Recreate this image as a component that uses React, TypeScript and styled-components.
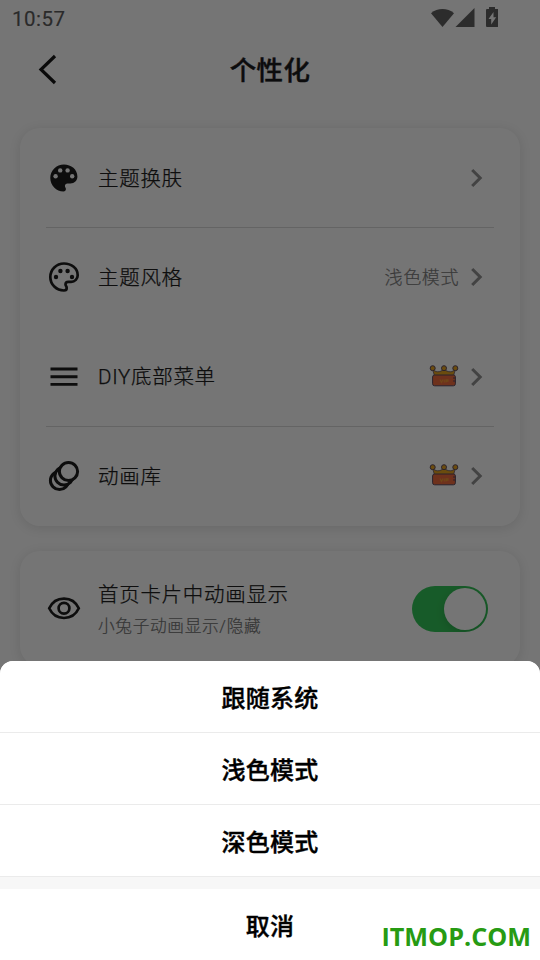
import React from 'react';
import styled, { createGlobalStyle } from 'styled-components';

const GlobalStyle = createGlobalStyle`
  * { box-sizing: border-box; }
  html, body { margin: 0; padding: 0; background: #fff; }
  body { font-family: Roboto, "Noto Sans CJK SC", sans-serif; }
`;

const Screen = styled.div`
  position: relative;
  width: 540px;
  height: 960px;
  overflow: hidden;
  background: #fefefe;
`;

const StatusBar = styled.div`
  display: flex;
  align-items: center;
  justify-content: space-between;
  height: 38px;
  padding: 0 42px 0 12px;
  color: #5c5c5c;
  font-size: 20.5px;
  font-weight: 400;
  letter-spacing: 0.5px;
  -webkit-text-stroke: 0.15px #5c5c5c;
`;

const StatusIcons = styled.svg`
  display: block;
  width: 68px;
  height: 22px;
  margin-bottom: 4px;
`;

const Header = styled.header`
  display: grid;
  grid-template-columns: 96px 1fr 96px;
  align-items: center;
  height: 64px;
`;

const Back = styled.svg`
  width: 30px;
  height: 34px;
  margin: -3px 0 0 32px;
`;

const Title = styled.h1`
  margin: 2px 0 0;
  color: #1c1c1e;
  font-size: 26.5px;
  font-weight: 500;
  line-height: 40px;
  letter-spacing: 0.3px;
  text-align: center;
  -webkit-text-stroke: 0.4px #1c1c1e;
`;

const Cards = styled.main`
  display: flex;
  flex-direction: column;
  gap: 25px;
  padding: 26px 20px 0;
`;

const Card = styled.section`
  border-radius: 20px;
  background: #fff;
  box-shadow: 0 2px 12px rgba(0, 0, 0, 0.11);
`;

const Row = styled.div<{ $height: number; $divider?: boolean; $top?: number }>`
  display: grid;
  grid-template-columns: 36px 1fr auto;
  column-gap: 16px;
  align-items: center;
  height: ${p => p.$height}px;
  margin: 0 26px;
  padding: ${p => p.$top ?? 0}px 10px 0 0;
  border-bottom: ${p => (p.$divider ? '1px solid #dadada' : '0')};
`;

const Icon = styled.svg`
  display: block;
  width: 36px;
  height: 36px;
  margin: -1px 0 0 -0.5px;
`;

const Label = styled.div`
  padding-top: 1px;
  color: #202020;
  font-size: 20.5px;
  font-weight: 300;
  line-height: 30px;
  letter-spacing: 0.7px;
  -webkit-text-stroke: 0.25px #202020;
`;

const TextBlock = styled.div`
  padding-top: 2px;
`;

const Caption = styled.div`
  margin-top: 3px;
  color: #747474;
  font-size: 16.7px;
  font-weight: 300;
  line-height: 28px;
  letter-spacing: 0.65px;
  -webkit-text-stroke: 0.2px #747474;
`;

const Trailing = styled.div<{ $raised?: boolean }>`
  display: flex;
  align-items: center;
  margin-top: ${p => (p.$raised ? '-2px' : '0')};
`;

const Value = styled.span`
  margin: 3px 11px 0 0;
  color: #7c7c7c;
  font-size: 18px;
  font-weight: 300;
  line-height: 26px;
  letter-spacing: 0.6px;
  -webkit-text-stroke: 0.2px #7c7c7c;
`;

const Arrow = styled.svg`
  width: 14px;
  height: 20px;
`;

const CrownSvg = styled.svg`
  width: 30px;
  height: 24px;
  margin: 0 11px 1px 0;
`;

const Switch = styled.div`
  display: flex;
  align-items: center;
  justify-content: flex-end;
  width: 76px;
  height: 46px;
  margin-right: -4px;
  padding: 2px;
  border-radius: 23px;
  overflow: hidden;
  background: #34c759;
`;

const Knob = styled.div`
  width: 42px;
  height: 42px;
  border-radius: 50%;
  background: #fff;
  box-shadow: 0 3px 10px rgba(0, 0, 0, 0.15);
`;

const Scrim = styled.div`
  position: absolute;
  inset: 0;
  display: flex;
  flex-direction: column;
  justify-content: flex-end;
  background: rgba(0, 0, 0, 0.54);
`;

const Sheet = styled.div`
  height: 299px;
  overflow: hidden;
  border-radius: 13px 13px 0 0;
  background: #fff;
`;

const Option = styled.button<{ $last?: boolean }>`
  display: block;
  width: 100%;
  height: 72px;
  padding: ${p => (p.$last ? '3px' : '4px')} 0 0;
  border: 0;
  border-bottom: ${p => (p.$last ? '0' : '1px solid #ebebeb')};
  background: #fff;
  color: #000;
  font: 500 24px/36px Roboto, "Noto Sans CJK SC", sans-serif;
  letter-spacing: 0.2px;
  -webkit-text-stroke: 0.4px #000;
`;

const Gap = styled.div`
  height: 12px;
  background: #f7f7f7;
`;

const Watermark = styled.div`
  position: absolute;
  right: 9px;
  bottom: 6px;
  color: #279b13;
  font: 700 25.2px/36px "Open Sans", sans-serif;
`;

const PaletteIcon = ({ outlined }: { outlined?: boolean }) => (
  <Icon viewBox="0 0 36 36">
    {outlined ? (
      <path
        d="M18 4.5C10.4 4.5 4.3 10.5 4.3 18S10.4 31.5 18 31.5c1.6 0 2.7-1 2.7-2.5 0-1.8-1.2-2.1-1.2-3.5 0-1.5 1.2-2.7 2.8-2.7h2.8c3.8 0 6.6-2.9 6.6-6.6C31.7 9.5 25.5 4.5 18 4.5Z"
        fill="none" stroke="#1d1d1d" strokeWidth="2.7"
      />
    ) : (
      <path
        d="M18 4.5C10.3 4.5 4.3 10.5 4.3 18S10.3 31.5 17.5 31.5c1.5 0 2.4-1 2.4-2.4 0-1.6-1-2-1-3.2 0-1.5 1.1-2.5 2.5-2.5h3c4.1 0 7-3.1 7-7C31.4 9.5 25.2 4.5 18 4.5Z"
        fill="#1d1d1d"
      />
    )}
    {(outlined
      ? [[10, 18], [14.4, 12], [21.6, 12], [26, 18]]
      : [[9.6, 16.2], [14.2, 10.4], [21.6, 10.4], [26.2, 16.2]]
    ).map(([x, y]) => (
      <circle key={x} cx={x} cy={y} r="2.2" fill={outlined ? '#1d1d1d' : '#fff'} />
    ))}
  </Icon>
);

const MenuIcon = () => (
  <Icon viewBox="0 0 36 36">
    <path d="M4.5 11h27M4.5 18.7h27M4.5 26.4h27" stroke="#1d1d1d" strokeWidth="2.9" />
  </Icon>
);

const RingsIcon = () => (
  <Icon viewBox="0 0 36 36">
    <g fill="#fff" stroke="#1d1d1d" strokeWidth="3">
      <circle cx="13.5" cy="22.5" r="9.1" />
      <circle cx="18" cy="18" r="9.1" />
      <circle cx="22.5" cy="13.5" r="9.1" />
    </g>
  </Icon>
);

const EyeIcon = () => (
  <Icon viewBox="0 0 36 36">
    <g fill="none" stroke="#1d1d1d" strokeWidth="2.7">
      <path d="M3.2 18.3C6 12.3 11.5 8.6 18 8.6S30 12.3 32.8 18.3C30 24.3 24.5 28 18 28S6 24.3 3.2 18.3Z" />
      <circle cx="18" cy="18.3" r="5.4" />
    </g>
  </Icon>
);

const Chevron = () => (
  <Arrow viewBox="0 0 14 20">
    <path d="M2.2 2 10.2 10 2.2 18" fill="none" stroke="#929292" strokeWidth="3" />
  </Arrow>
);

const Crown = () => (
  <CrownSvg viewBox="0 0 30 24">
    <path d="M3.5 4.8C6 8.5 11 9 15 5c4 4 9 3.5 11.5-.2L24.5 12h-19Z" fill="#e9a520" stroke="#665565" strokeWidth="0.8" />
    <g stroke="#5d4b60" strokeWidth="1">
      <circle cx="3.7" cy="4.2" r="2.5" fill="#e9a520" />
      <circle cx="15" cy="4.2" r="2.5" fill="#e9a520" />
      <circle cx="26.3" cy="4.2" r="2.5" fill="#e9a520" />
      <rect x="3.6" y="11" width="22.8" height="10.8" rx="2" fill="#f06b3e" />
      <path d="M24 14h2.4M24 17h2.4" />
    </g>
    <path d="m11 15.5 1.5 3 1.5-3M15.3 15.5v3M17 18.5v-2.7h2v1.3h-2" fill="none" stroke="#f29b33" strokeWidth="1.1" />
  </CrownSvg>
);

export default function App() {
  return (
    <Screen>
      <GlobalStyle />
      <StatusBar>
        <span>10:57</span>
        <StatusIcons viewBox="0 0 68 22" fill="#606060">
          <path d="M1 7.2C7.5 1.6 17.5 1.6 24 7.2L12.5 21Z" />
          <path d="M25.5 21 44.5 2v19Z" />
          <path fillRule="evenodd" d="M59 3V1h6v2h2.500q.8 0 .8.800v16.200q0 1-1 1H57q-1 0-1-1V4q0-1 1-1ZM63.500 6l-5 7h2.700v5.500l5-7.300h-2.700Z" />
        </StatusIcons>
      </StatusBar>
      <Header>
        <Back viewBox="0 0 30 34">
          <path d="M23 4 9 17.5 23 31" fill="none" stroke="#171717" strokeWidth="3.2" />
        </Back>
        <Title>个性化</Title>
      </Header>
      <Cards>
        <Card>
          <Row $height={100} $divider $top={2}>
            <PaletteIcon />
            <Label>主题换肤</Label>
            <Trailing $raised><Chevron /></Trailing>
          </Row>
          <Row $height={99}>
            <PaletteIcon outlined />
            <Label>主题风格</Label>
            <Trailing $raised><Value>浅色模式</Value><Chevron /></Trailing>
          </Row>
          <Row $height={100} $divider>
            <MenuIcon />
            <Label>DIY底部菜单</Label>
            <Trailing><Crown /><Chevron /></Trailing>
          </Row>
          <Row $height={99}>
            <RingsIcon />
            <Label>动画库</Label>
            <Trailing $raised><Crown /><Chevron /></Trailing>
          </Row>
        </Card>
        <Card>
          <Row $height={115}>
            <EyeIcon />
            <TextBlock>
              <Label>首页卡片中动画显示</Label>
              <Caption>小兔子动画显示/隐藏</Caption>
            </TextBlock>
            <Switch><Knob /></Switch>
          </Row>
        </Card>
      </Cards>
      <Scrim>
        <Sheet>
          <Option>跟随系统</Option>
          <Option>浅色模式</Option>
          <Option>深色模式</Option>
          <Gap />
          <Option $last>取消</Option>
        </Sheet>
      </Scrim>
      <Watermark>ITMOP.COM</Watermark>
    </Screen>
  );
}
